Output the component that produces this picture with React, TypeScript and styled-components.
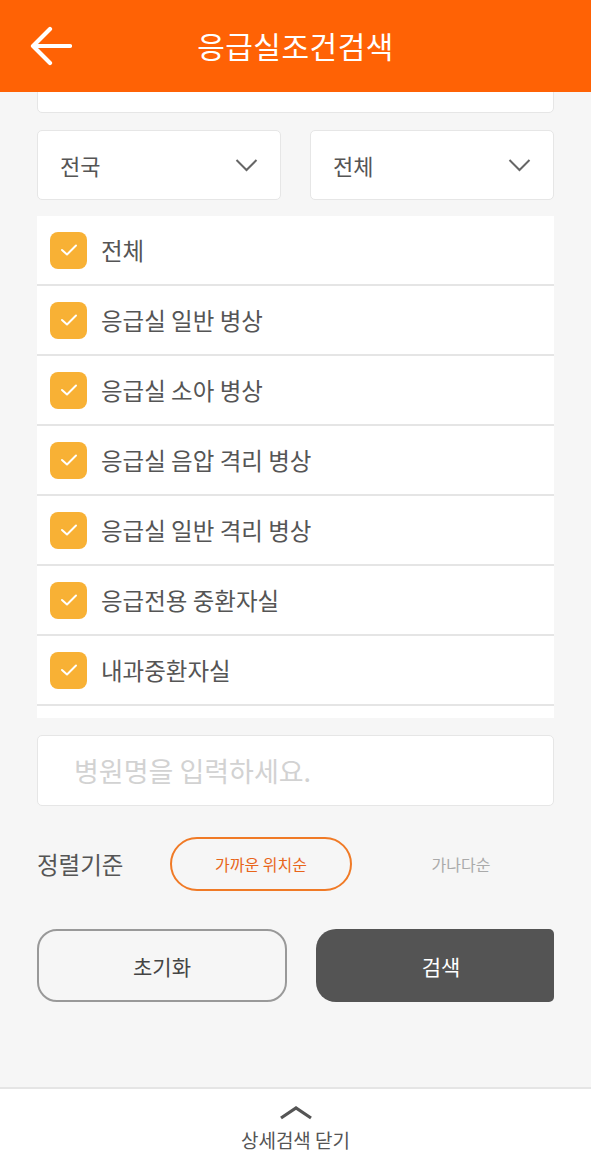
import React from 'react';
import styled, { createGlobalStyle } from 'styled-components';

const GlobalStyle = createGlobalStyle`
    html, body {
        margin: 0;
        padding: 0;
        background-color: #f6f6f6;
    }
    body {
        font-family: "Noto Sans CJK KR", "Noto Sans", sans-serif;
    }
    * {
        box-sizing: border-box;
    }
`;

export const Page = styled.div`
    display: flex;
    flex-direction: column;
    width: 591px;
    height: 1169px;
    background-color: #f6f6f6;
`;

export const Header = styled.header`
    display: grid;
    grid-template-columns: 1fr auto 1fr;
    align-items: center;
    height: 92px;
    flex-shrink: 0;
    background-color: #ff6205;
    color: white;
`;

export const BackButton = styled.div`
    display: flex;
    align-items: center;
    padding-left: 30px;
`;

export const Title = styled.h1`
    margin: 0;
    font-size: 30px;
    font-weight: 400;
    letter-spacing: 0.5px;
    padding-bottom: 2px;
`;

export const Content = styled.main`
    flex: 1;
    overflow: hidden;
    display: flex;
    flex-direction: column;
    padding: 0 37px;
`;

export const Box = styled.div<{ $height?: number }>`
    height: ${(p) => p.$height ?? 71}px;
    background-color: white;
    border: 1px solid #e6e6e6;
    border-radius: 5px;
    flex-shrink: 0;
`;

export const ClippedField = styled(Box)`
    margin-top: -50px;
`;

export const SelectRow = styled.div`
    display: grid;
    grid-template-columns: 1fr 1fr;
    gap: 29px;
    margin-top: 17px;
`;

export const Select = styled(Box)`
    display: flex;
    align-items: center;
    justify-content: space-between;
    padding: 0 22px 0 22px;
    font-size: 22px;
    color: #555;
`;

export const CheckList = styled.div`
    margin-top: 16px;
    height: 502px;
    flex-shrink: 0;
    overflow: hidden;
    background-color: white;
`;

export const Row = styled.div`
    display: flex;
    align-items: center;
    gap: 14px;
    height: 70px;
    padding-left: 13px;
    border-bottom: 2px solid #e5e5e5;
    font-size: 23.5px;
    color: #555;
`;

export const CheckBox = styled.span<{ $checked: boolean }>`
    display: flex;
    align-items: center;
    justify-content: center;
    width: 37px;
    height: 37px;
    border-radius: 8px;
    background-color: ${(p) => (p.$checked ? '#f8b135' : 'white')};
    border: ${(p) => (p.$checked ? 'none' : '2px solid #ccc')};
`;

export const SearchField = styled(Box)`
    margin-top: 17px;
    display: flex;
    align-items: center;
    padding-left: 36px;
    font-size: 27px;
    color: #d2d2d2;
`;

export const SortRow = styled.div`
    display: flex;
    align-items: center;
    height: 54px;
    margin-top: 31px;
`;

export const SortLabel = styled.span`
    width: 133px;
    flex-shrink: 0;
    font-size: 23.5px;
    color: #555;
`;

export const SortOption = styled.span<{ $active?: boolean }>`
    display: flex;
    align-items: center;
    justify-content: center;
    flex: ${(p) => (p.$active ? '0 0 182px' : '1')};
    height: 54px;
    padding-left: ${(p) => (p.$active ? 0 : 16)}px;
    border-radius: 27px;
    border: 2px solid ${(p) => (p.$active ? '#f07a26' : 'transparent')};
    color: ${(p) => (p.$active ? '#e8651a' : '#aaa')};
    font-size: 16px;
`;

export const ButtonRow = styled.div`
    display: grid;
    grid-template-columns: 250px 1fr;
    gap: 29px;
    margin-top: 38px;
`;

export const Button = styled.div<{ $primary?: boolean }>`
    display: flex;
    align-items: center;
    justify-content: center;
    height: 73px;
    padding-left: ${(p) => (p.$primary ? 12 : 0)}px;
    font-size: 21px;
    border-radius: ${(p) => (p.$primary ? '20px 5px 5px 20px' : '20px')};
    background-color: ${(p) => (p.$primary ? '#545454' : 'transparent')};
    color: ${(p) => (p.$primary ? 'white' : '#444')};
    border: ${(p) => (p.$primary ? 'none' : '2px solid #999')};
`;

export const Footer = styled.footer`
    height: 82px;
    flex-shrink: 0;
    display: flex;
    flex-direction: column;
    align-items: center;
    padding-top: 16px;
    gap: 6px;
    background-color: white;
    border-top: 2px solid #e5e5e5;
    color: #555;
    font-size: 19px;
`;

const Chevron: React.FC = () => (
    <svg width="23" height="15" viewBox="0 0 23 15">
        <polyline points="1.5,2 11.5,12 21.5,2" fill="none" stroke="#666" strokeWidth="2" />
    </svg>
);

const categories = [
    '전체',
    '응급실 일반 병상',
    '응급실 소아 병상',
    '응급실 음압 격리 병상',
    '응급실 일반 격리 병상',
    '응급전용 중환자실',
    '내과중환자실',
];

const App: React.FC = () => {
    return (
        <Page>
            <GlobalStyle />
            <Header>
                <BackButton>
                    <svg width="42" height="40" viewBox="0 0 42 40">
                        <path d="M40 20 H4 M20 3 L3 20 L20 37" fill="none" stroke="white" strokeWidth="4.2" strokeLinecap="round" strokeLinejoin="round" />
                    </svg>
                </BackButton>
                <Title>응급실조건검색</Title>
                <div />
            </Header>
            <Content>
                <ClippedField />
                <SelectRow>
                    <Select $height={70}>
                        전국
                        <Chevron />
                    </Select>
                    <Select $height={70}>
                        전체
                        <Chevron />
                    </Select>
                </SelectRow>
                <CheckList>
                    {categories.map((c) => (
                        <Row key={c}>
                            <CheckBox $checked>
                                <svg width="18" height="14" viewBox="0 0 18 14">
                                    <polyline points="2,7 7,11.5 16,2.5" fill="none" stroke="white" strokeWidth="2" strokeLinecap="round" strokeLinejoin="round" />
                                </svg>
                            </CheckBox>
                            {c}
                        </Row>
                    ))}
                    {/* next row scrolled out of view */}
                    <Row />
                </CheckList>
                <SearchField>병원명을 입력하세요.</SearchField>
                <SortRow>
                    <SortLabel>정렬기준</SortLabel>
                    <SortOption $active>가까운 위치순</SortOption>
                    <SortOption>가나다순</SortOption>
                </SortRow>
                <ButtonRow>
                    <Button>초기화</Button>
                    <Button $primary>검색</Button>
                </ButtonRow>
            </Content>
            <Footer>
                <svg width="34" height="15" viewBox="0 0 34 15">
                    <polyline points="2,13 17,3 32,13" fill="none" stroke="#555" strokeWidth="3.2" />
                </svg>
                상세검색 닫기
            </Footer>
        </Page>
    );
};

export default App;
